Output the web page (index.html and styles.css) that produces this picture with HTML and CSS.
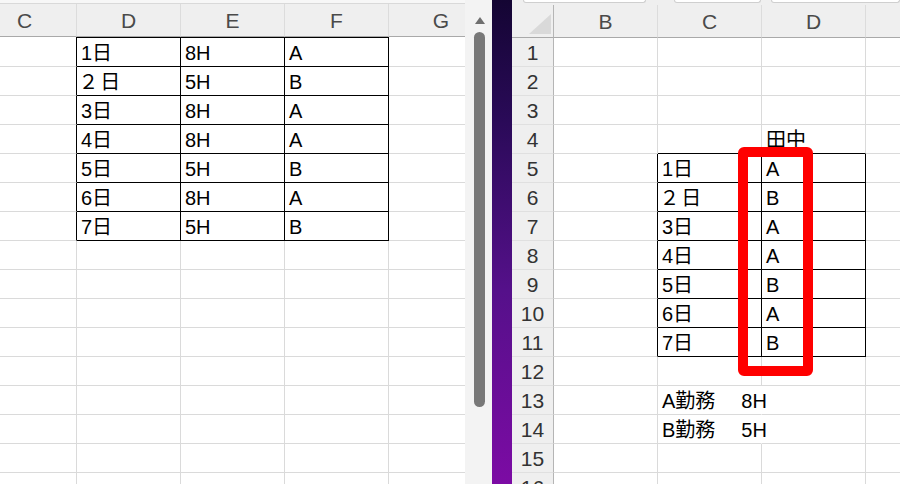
FILE: index.html
```html
<!DOCTYPE html>
<html lang="ja">
<head>
<meta charset="utf-8">
<title>Sheets</title>
<link rel="stylesheet" href="styles.css">
</head>
<body>
<div class="screen">
  <section class="pane left">
    <div class="sheet">
      <div class="topstrip"></div>
      <div class="grid lgrid">
        <div class="h first">C</div><div class="h">D</div><div class="h">E</div><div class="h">F</div><div class="h last">G</div>

        <div class="c tl"></div><div class="c t top">1日</div><div class="c t top">8H</div><div class="c t top">A</div><div class="c last"></div>
        <div class="c tl"></div><div class="c t"><span class="fw">２</span>日</div><div class="c t">5H</div><div class="c t">B</div><div class="c last"></div>
        <div class="c tl"></div><div class="c t">3日</div><div class="c t">8H</div><div class="c t">A</div><div class="c last"></div>
        <div class="c tl"></div><div class="c t">4日</div><div class="c t">8H</div><div class="c t">A</div><div class="c last"></div>
        <div class="c tl"></div><div class="c t">5日</div><div class="c t">5H</div><div class="c t">B</div><div class="c last"></div>
        <div class="c tl"></div><div class="c t">6日</div><div class="c t">8H</div><div class="c t">A</div><div class="c last"></div>
        <div class="c tl"></div><div class="c t">7日</div><div class="c t">5H</div><div class="c t">B</div><div class="c last"></div>
        <div class="c"></div><div class="c"></div><div class="c"></div><div class="c"></div><div class="c last"></div>
        <div class="c"></div><div class="c"></div><div class="c"></div><div class="c"></div><div class="c last"></div>
        <div class="c"></div><div class="c"></div><div class="c"></div><div class="c"></div><div class="c last"></div>
        <div class="c"></div><div class="c"></div><div class="c"></div><div class="c"></div><div class="c last"></div>
        <div class="c"></div><div class="c"></div><div class="c"></div><div class="c"></div><div class="c last"></div>
        <div class="c"></div><div class="c"></div><div class="c"></div><div class="c"></div><div class="c last"></div>
        <div class="c"></div><div class="c"></div><div class="c"></div><div class="c"></div><div class="c last"></div>
        <div class="c"></div><div class="c"></div><div class="c"></div><div class="c"></div><div class="c last"></div>
        <div class="c"></div><div class="c"></div><div class="c"></div><div class="c"></div><div class="c last"></div>
      </div>
    </div>
    <div class="vscroll">
      <span class="arrow"></span>
      <span class="thumb"></span>
    </div>
  </section>

  <div class="divider"></div>

  <section class="pane right">
    <div class="topstrip tabs">
      <span class="tab tab1"></span><span class="tab tab2"></span><span class="tab tab3"></span>
    </div>
    <div class="grid rgrid">
      <div class="h corner"><svg width="22" height="20" viewBox="0 0 22 20"><polygon points="22,0 22,20 0,20" fill="#d9d9d9"/></svg></div>
      <div class="h">B</div><div class="h">C</div><div class="h">D</div><div class="h last"></div>

      <div class="rn">1</div><div class="c"></div><div class="c"></div><div class="c"></div><div class="c last"></div>
      <div class="rn">2</div><div class="c"></div><div class="c"></div><div class="c"></div><div class="c last"></div>
      <div class="rn">3</div><div class="c"></div><div class="c"></div><div class="c"></div><div class="c last"></div>
      <div class="rn">4</div><div class="c"></div><div class="c tt"></div><div class="c tt">田中</div><div class="c last"></div>
      <div class="rn">5</div><div class="c tl"></div><div class="c t">1日</div><div class="c t">A</div><div class="c last"></div>
      <div class="rn">6</div><div class="c tl"></div><div class="c t"><span class="fw">２</span>日</div><div class="c t">B</div><div class="c last"></div>
      <div class="rn">7</div><div class="c tl"></div><div class="c t">3日</div><div class="c t">A</div><div class="c last"></div>
      <div class="rn">8</div><div class="c tl"></div><div class="c t">4日</div><div class="c t">A</div><div class="c last"></div>
      <div class="rn">9</div><div class="c tl"></div><div class="c t">5日</div><div class="c t">B</div><div class="c last"></div>
      <div class="rn">10</div><div class="c tl"></div><div class="c t">6日</div><div class="c t">A</div><div class="c last"></div>
      <div class="rn">11</div><div class="c tl"></div><div class="c t">7日</div><div class="c t">B</div><div class="c last"></div>
      <div class="rn">12</div><div class="c"></div><div class="c"></div><div class="c"></div><div class="c last"></div>
      <div class="rn">13</div><div class="c"></div><div class="c over">A勤務<span class="sp"></span>8H</div><div class="c"></div><div class="c last"></div>
      <div class="rn">14</div><div class="c"></div><div class="c over">B勤務<span class="sp"></span>5H</div><div class="c"></div><div class="c last"></div>
      <div class="rn">15</div><div class="c"></div><div class="c"></div><div class="c"></div><div class="c last"></div>
      <div class="rn">16</div><div class="c"></div><div class="c"></div><div class="c"></div><div class="c last"></div>
    </div>
    <div class="redbox"></div>
  </section>
</div>
</body>
</html>
```

FILE: styles.css
```css
* { box-sizing: border-box; }
html, body {
  margin: 0;
  padding: 0;
  width: 900px;
  height: 484px;
  overflow: hidden;
  background: #ffffff;
}
.screen {
  display: flex;
  width: 900px;
  height: 484px;
  font-family: "Liberation Sans", "Noto Sans CJK JP", sans-serif;
  color: #111;
}
.pane {
  height: 484px;
  overflow: hidden;
}
.pane.left {
  width: 492px;
  display: flex;
}
.sheet {
  width: 465px;
  overflow: hidden;
}
.topstrip {
  height: 4px;
  background: #f7f7f7;
  border-bottom: 1px solid #d9d9d9;
}
.grid {
  display: grid;
}
.lgrid {
  grid-template-columns: 77px 104px 104px 104px 76px;
  grid-template-rows: 33px 30px repeat(15, 29px);
}
.rgrid {
  grid-template-columns: 42px 104px 104px 104px 34px;
  grid-template-rows: 33px repeat(16, 29px);
  background: #ffffff;
}
.h {
  background: #efefef;
  border-right: 1px solid #dcdcdc;
  border-bottom: 1px solid #a9a9a9;
  color: #4a4a4a;
  font-size: 21px;
  display: flex;
  align-items: center;
  justify-content: center;
  padding-top: 1px;
}
.h.first { padding-right: 27px; }
.lgrid .h.last { padding-left: 28px; }
.h.corner {
  justify-content: flex-end;
  align-items: flex-end;
  padding: 0 2px 3px 0;
  border-right: 1px solid #b5b5b5;
}
.c {
  border-right: 1px solid #dadada;
  border-bottom: 1px solid #dadada;
  font-size: 20px;
  line-height: 24px;
  padding: 0 0 1px 4px;
  display: flex;
  align-items: flex-end;
  white-space: nowrap;
  color: #000;
}
.fw { font-feature-settings: "palt"; margin-right: 4px; }
.c.last, .h.last { border-right: none; }
.c.t {
  border-right-color: #000;
  border-bottom-color: #000;
}
.c.top { border-top: 1px solid #000; }
.c.tl { border-right-color: #000; }
.c.tt { border-bottom-color: #000; }
.c.over {
  overflow: visible;
  border-right-color: transparent;
}
.sp {
  display: inline-block;
  flex: none;
  width: 26px;
}
.rn {
  background: #efefef;
  border-right: 1px solid #b5b5b5;
  border-bottom: 1px solid #e0e0e0;
  color: #333;
  font-size: 21px;
  display: flex;
  align-items: center;
  justify-content: center;
  padding-top: 1px;
}
.vscroll {
  width: 27px;
  background: #f3f3f3;
  display: flex;
  flex-direction: column;
  align-items: center;
  padding-top: 17px;
  padding-left: 2px;
}
.arrow {
  width: 0;
  height: 0;
  border-left: 5px solid transparent;
  border-right: 5px solid transparent;
  border-bottom: 7px solid #6f6f6f;
}
.thumb {
  margin-top: 8px;
  width: 11px;
  height: 375px;
  border-radius: 6px;
  background: #787878;
}
.divider {
  width: 20px;
  height: 484px;
  background: linear-gradient(to bottom, #140533 0%, #2a0a58 25%, #55108a 60%, #7c0ba4 100%);
}
.pane.right {
  width: 388px;
  position: relative;
  background: #efefef;
}
.tabs {
  display: flex;
  background: #efefef;
  border-bottom: none;
  height: 5px;
}
.tab {
  height: 3px;
  background: #fff;
  border: 1px solid #cfcfcf;
  border-top: none;
  border-radius: 0 0 5px 5px;
}
.tab1 { margin-left: 11px; width: 124px; }
.tab2 { margin-left: 28px; width: 88px; }
.tab3 { margin-left: 10px; width: 130px; }
.redbox {
  position: absolute;
  left: 226px;
  top: 147px;
  width: 75px;
  height: 229px;
  border: 10px solid #ff0000;
  border-radius: 6px;
}
```
